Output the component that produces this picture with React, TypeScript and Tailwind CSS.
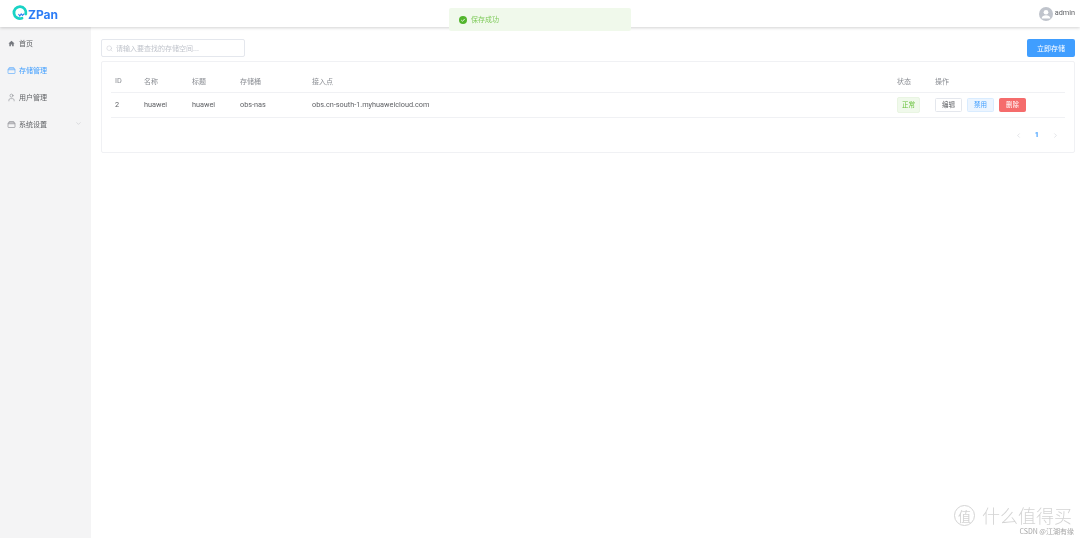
import React from "react";
import { ChevronDown, ChevronLeft, ChevronRight, Search, User } from "lucide-react";

const font = "[font-family:'Noto_Sans_CJK_SC','Noto_Sans',sans-serif]";
const latin = "[font-family:Roboto,'Noto_Sans',sans-serif] text-[7.3px]";

function BoxIcon({ className }: { className: string }) {
  return (
    <svg viewBox="0 0 16 14" className={className} fill="none" stroke="currentColor" strokeWidth="1.100">
      <rect x="1" y="3.500" width="14" height="9.500" rx="1.200" />
      <path d="M3 3.500V2a1 1 0 0 1 1-1h8a1 1 0 0 1 1 1v1.500" />
      <path d="M1 5.500h14" />
    </svg>
  );
}

function HomeIcon() {
  return (
    <svg viewBox="0 0 16 16" className="w-[7px] h-[7px] text-[#75787e]" fill="currentColor">
      <path d="M8 1.500 1 8h2v6.500h3.600V10h2.800v4.500H13V8h2z" />
    </svg>
  );
}

function NavItem({ icon, label, active, chevron }: { icon: React.ReactNode; label: string; active?: boolean; chevron?: boolean }) {
  return (
    <div className={`h-[27px] flex items-center pl-[7px] pr-[9px] gap-[3px] text-[7px] ${active ? "text-[#409eff]" : "text-[#606266]"}`}>
      <span className={`w-[9px] flex justify-center ${active ? "" : "text-[#75787e]"}`}>{icon}</span>
      <span className="flex-1">{label}</span>
      {chevron && <ChevronDown className="w-[7px] h-[7px] text-[#a8abb2] -mt-[3px]" strokeWidth={1.200} />}
    </div>
  );
}

function Btn({ label, cls }: { label: string; cls: string }) {
  return <div className={`w-[27px] h-[14px] rounded-[1.500px] border flex items-center justify-center text-[6.500px] ${cls}`}>{label}</div>;
}

const cols = "grid grid-cols-[29px_48px_48px_72px_585px_38px_1fr] pl-[4px] items-center";

export default function App() {
  return (
    <div className={`relative w-[1080px] h-[538px] overflow-hidden bg-white flex flex-col blur-[0.35px] ${font}`}>
      <header className="h-[27px] shrink-0 flex items-center justify-between pl-[12px] pr-[5px] bg-white shadow-[0_1px_3px_rgba(0,0,0,0.18)] z-10">
        <div className="flex items-center -mt-[1px]">
          <svg viewBox="0 0 16 16" className="w-[16px] h-[16px]" fill="none">
            <path d="M10 13.300A6 6 0 1 1 13.800 9" stroke="#19d3c5" strokeWidth="2.800" strokeLinecap="round" />
            <path d="M6.500 9l1.300 2 1.400-2 1.300 1.500 1.800-1.800" stroke="#2b7cf6" strokeWidth="1.100" fill="none" />
          </svg>
          <span className="text-[12px] font-bold text-[#2b7cf6] leading-none [font-family:'Inter',sans-serif] mt-[3px]">ZPan</span>
        </div>
        <div className="flex items-center gap-[2px]">
          <div className="w-[14px] h-[14px] rounded-full bg-[#c0c4cc] flex items-center justify-center overflow-hidden">
            <svg viewBox="0 0 16 16" className="w-[14px] h-[14px]" fill="#fff">
              <circle cx="8" cy="6" r="2.700" />
              <path d="M3 13c.3-2.600 2.400-3.600 5-3.600s4.700 1 5 3.600z" />
            </svg>
          </div>
          <span className={`${latin} text-[#606266]`}>admin</span>
        </div>
      </header>

      <div className="flex flex-1 min-h-0">
        <aside className="w-[91px] shrink-0 bg-[#f4f4f5] pt-[3px]">
          <NavItem icon={<HomeIcon />} label="首页" />
          <NavItem icon={<BoxIcon className="w-[9px] h-[7px]" />} label="存储管理" active />
          <NavItem icon={<User className="w-[9px] h-[9px]" strokeWidth={1.300} />} label="用户管理" />
          <NavItem icon={<BoxIcon className="w-[9px] h-[7px]" />} label="系统设置" chevron />
        </aside>

        <main className="flex-1 pt-[12px] pl-[10px] pr-[5px]">
          <div className="flex justify-between items-center h-[18px]">
            <div className="w-[144px] h-full rounded-[2px] border border-[#e4e7ed] flex items-center pl-[4px] gap-[3px] text-[7px] text-[#c0c4cc]">
              <Search className="w-[7px] h-[7px]" strokeWidth={1.500} />
              <span>请输入要查找的存储空间...</span>
            </div>
            <div className="w-[48px] h-full rounded-[2px] bg-[#409eff] text-white text-[7px] flex items-center justify-center">立即存储</div>
          </div>

          <section className="mt-[4px] h-[92px] rounded-[2px] border border-[#f0f1f4] px-[9px] pt-[9px]">
            <div className={`${cols} h-[22px] border-b border-[#f0f1f4] text-[7px] text-[#8a8d93]`}>
              <span className={latin}>ID</span>
              <span>名称</span>
              <span>标题</span>
              <span>存储桶</span>
              <span>接入点</span>
              <span>状态</span>
              <span>操作</span>
            </div>
            <div className={`${cols} h-[25px] border-b border-[#f0f1f4] text-[#606266]`}>
              <span className={latin}>2</span>
              <span className={latin}>huawei</span>
              <span className={latin}>huawei</span>
              <span className={latin}>obs-nas</span>
              <span className={latin}>obs.cn-south-1.myhuaweicloud.com</span>
              <span className="w-[23px] h-[16px] rounded-[2px] bg-[#f0f9eb] border border-[#e9f5e2] text-[#67c23a] text-[6.500px] flex items-center justify-center">正常</span>
              <div className="flex gap-[5px]">
                <Btn label="编辑" cls="border-[#e4e7ed] bg-white text-[#606266]" />
                <Btn label="禁用" cls="border-[#d9ecff] bg-[#ecf5ff] text-[#409eff]" />
                <Btn label="删除" cls="border-[#f56c6c] bg-[#f56c6c] text-white" />
              </div>
            </div>
            <div className="flex justify-end items-center h-[34px] pr-[6px] text-[7px]">
              <ChevronLeft className="w-[7px] h-[7px] text-[#c0c4cc]" strokeWidth={1.500} />
              <span className={`ml-[13px] font-bold text-[#409eff] ${latin}`}>1</span>
              <ChevronRight className="ml-[13px] w-[7px] h-[7px] text-[#c0c4cc]" strokeWidth={1.500} />
            </div>
          </section>
        </main>
      </div>

      <div className="absolute z-20 left-[449px] top-[8px] w-[182px] h-[23px] rounded-[2px] bg-[#f0f9eb] flex items-center pl-[10px] gap-[4px] text-[7px] text-[#7fcb5a]">
        <svg viewBox="0 0 16 16" className="w-[8px] h-[8px]">
          <circle cx="8" cy="8" r="8" fill="#52b52c" />
          <path d="M4.500 8.200 7 10.600l4.500-4.800" stroke="#fff" strokeWidth="1.700" fill="none" />
        </svg>
        <span>保存成功</span>
      </div>

      <div className="absolute left-[954px] top-[505px] h-[21px] flex items-center gap-[7px] text-[#d4d4d4]">
        <span className="w-[21px] h-[21px] rounded-full border-[1.500px] border-[#d4d4d4] flex items-center justify-center text-[13px] leading-none">值</span>
        <span className="text-[18px] leading-[21px] font-light">什么值得买</span>
      </div>
      <div className="absolute right-[6px] top-[526px] text-[7px] leading-[10px] text-[#a5a5a5]">CSDN @江湖有缘</div>
    </div>
  );
}
